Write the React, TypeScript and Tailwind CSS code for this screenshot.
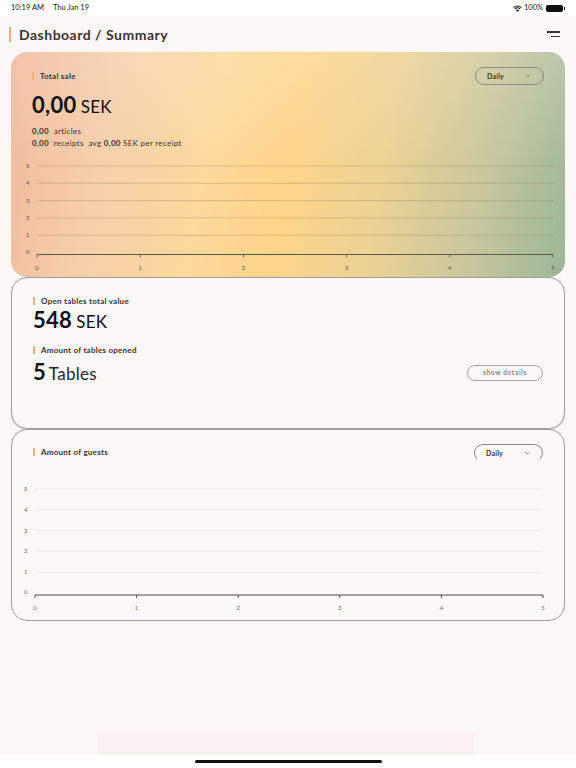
import { ChevronDown } from 'lucide-react';

const font = { fontFamily: 'Lato, "Open Sans", sans-serif' };

const SectionTitle = ({ text }: { text: string }) => (
  <div className="flex items-center gap-[6px]">
    <div className="w-[2px] h-[8px] bg-[#f2b072]" />
    <span className="text-[8px] font-bold tracking-[0.25px] text-[#3b3434]">{text}</span>
  </div>
);

const Dropdown = ({ open }: { open?: boolean }) => (
  <div
    className={`flex items-center justify-between w-[69px] h-[18px] px-[11px] rounded-full border border-[#8c8783] ${
      open ? 'border-b-transparent' : ''
    }`}
  >
    <span className="text-[7px] font-bold tracking-[0.2px] text-[#3b3434]">Daily</span>
    <ChevronDown className="w-[8px] h-[8px] text-[#6b6563]" strokeWidth={2} />
  </div>
);

// empty line chart: y labels 0..5, x labels 0..5
const EmptyChart = ({
  width,
  height,
  left,
  right,
  top,
  step,
  labelX,
  lineColor,
  axisColor,
  labelColor,
}: {
  width: number;
  height: number;
  left: number;
  right: number;
  top: number;
  step: number;
  labelX: number;
  lineColor: string;
  axisColor: string;
  labelColor: string;
}) => {
  const axisY = top + step * 5 + 2;
  const xs = [0, 1, 2, 3, 4, 5].map((i) => left + ((right - left) / 5) * i);
  return (
    <svg width={width} height={height} className="block">
      {[5, 4, 3, 2, 1].map((v, i) => (
        <g key={v}>
          <text x={labelX} y={top + i * step + 2} fontSize="6" fill={labelColor} fontFamily="Lato, sans-serif">
            {v}
          </text>
          <line x1={left} x2={right} y1={top + i * step} y2={top + i * step} stroke={lineColor} strokeWidth="1" />
        </g>
      ))}
      <text x={labelX} y={top + 5 * step + 1} fontSize="6" fill={labelColor} fontFamily="Lato, sans-serif">
        0
      </text>
      <line x1={left} x2={right} y1={axisY} y2={axisY} stroke={axisColor} strokeWidth="1" />
      {xs.map((x, i) => (
        <g key={i}>
          <line x1={x} x2={x} y1={axisY} y2={axisY + 3} stroke={axisColor} strokeWidth="1" />
          <text x={x} y={axisY + 15} fontSize="6" fill={labelColor} textAnchor="middle" fontFamily="Lato, sans-serif">
            {i}
          </text>
        </g>
      ))}
    </svg>
  );
};

const App = () => {
  return (
    <div style={font} className="w-[576px] h-[768px] bg-white flex flex-col overflow-hidden">
      {/* Status bar */}
      <div className="h-[16px] flex items-center justify-between px-[11px] text-[7.5px] text-[#1a1a1a]">
        <div className="flex gap-[9px]">
          <span>10:19 AM</span>
          <span>Thu Jan 19</span>
        </div>
        <div className="flex items-center gap-[2px]">
          <svg width="9" height="7" viewBox="0 0 12 9">
            <path d="M6 9 L4 6.8 A3 3 0 0 1 8 6.8 Z" fill="#111" />
            <path d="M2.4 5.2 A5.2 5.2 0 0 1 9.6 5.2" stroke="#111" strokeWidth="1.4" fill="none" />
            <path d="M0.7 3.3 A7.6 7.6 0 0 1 11.3 3.3" stroke="#111" strokeWidth="1.4" fill="none" />
          </svg>
          <span>100%</span>
          <div className="flex items-center ml-[1px]">
            <div className="w-[17px] h-[7px] rounded-[2px] bg-[#111]" />
            <div className="w-[1px] h-[3px] bg-[#111] ml-[1px]" />
          </div>
        </div>
      </div>

      {/* Page */}
      <div className="flex-1 bg-[#fbf8f7] flex flex-col relative">
        {/* Header */}
        <div className="flex items-center justify-between h-[36px] pl-[9px] pr-[16px]">
          <div className="flex items-center gap-[8px]">
            <div className="w-[2px] h-[15px] bg-[#f2b072]" />
            <h1 className="text-[14px] font-bold text-[#3b3434] tracking-[0.5px]">Dashboard / Summary</h1>
          </div>
          <div className="flex flex-col items-end gap-[3px]">
            <div className="w-[13px] h-[1.5px] bg-[#3b3434]" />
            <div className="w-[9px] h-[1.5px] bg-[#3b3434]" />
          </div>
        </div>

        <div className="px-[11px] flex flex-col">
          {/* Total sale card */}
          <div className="h-[225px] rounded-[16px] bg-[linear-gradient(180deg,rgba(255,255,255,0.15)_0%,rgba(255,255,255,0)_55%),linear-gradient(100deg,#f0b99c_0%,#f6cfab_18%,#fcd99c_36%,#fdd58a_50%,#ecd294_66%,#cbc89d_82%,#9bb797_100%)] flex flex-col">
            <div className="flex justify-between pt-[15px] pl-[21px] pr-[21px]">
              <div className="flex flex-col">
                <div className="pt-[3px]">
                  <SectionTitle text="Total sale" />
                </div>
                <div className="flex items-baseline gap-[4px] mt-[10px] text-[#111]">
                  <span className="text-[22px] font-bold leading-[26px] tracking-[0.3px]">0,00</span>
                  <span className="text-[17px] tracking-[0.3px]">SEK</span>
                </div>
                <div className="mt-[5px] text-[8px] leading-[12px] tracking-[0.3px] text-[#3b3434]">
                  <div>
                    <span className="font-bold">0,00</span>&nbsp; articles
                  </div>
                  <div>
                    <span className="font-bold">0,00</span>&nbsp; receipts&nbsp; avg <span className="font-bold">0,00</span> SEK per receipt
                  </div>
                </div>
              </div>
              <Dropdown />
            </div>
            <div className="mt-auto mb-[3px]">
              <EmptyChart
                width={554}
                height={118}
                left={26}
                right={542}
                top={10}
                step={17.3}
                labelX={15}
                lineColor="rgba(120,100,70,0.25)"
                axisColor="#5d5a50"
                labelColor="#5d5850"
              />
            </div>
          </div>

          {/* Open tables card */}
          <div className="h-[152px] rounded-[16px] border border-[#a29d9a] shadow-[0_1px_1px_rgba(0,0,0,0.15)] bg-[#fbf8f7] flex pt-[17px] pl-[21px] pr-[21px]">
            <div className="flex-1 flex flex-col">
              <SectionTitle text="Open tables total value" />
              <div className="flex items-baseline gap-[4px] mt-[1px] text-[#111]">
                <span className="text-[22px] font-bold leading-[24px] tracking-[0.3px]">548</span>
                <span className="text-[17px] tracking-[0.3px]">SEK</span>
              </div>
              <div className="mt-[9px]">
                <SectionTitle text="Amount of tables opened" />
              </div>
              <div className="flex items-center justify-between mt-[4px]">
                <div className="flex items-baseline gap-[3px] text-[#111]">
                  <span className="text-[22px] font-bold leading-[24px]">5</span>
                  <span className="text-[17px] tracking-[0.3px] text-[#2a2626]">Tables</span>
                </div>
                <div className="w-[76px] h-[16px] rounded-full border border-[#aaa5a3] flex items-center justify-center text-[6.5px] font-bold tracking-[0.7px] text-[#8c8785]">
                  show details
                </div>
              </div>
            </div>
          </div>

          {/* Guests card */}
          <div className="h-[192px] rounded-[16px] border border-[#a29d9a] bg-[#fbf8f7] flex flex-col">
            <div className="flex justify-between pt-[14px] pl-[21px] pr-[21px]">
              <div className="pt-[2px]">
                <SectionTitle text="Amount of guests" />
              </div>
              <Dropdown open />
            </div>
            <div className="mt-auto mb-[7px]">
              <EmptyChart
                width={552}
                height={128}
                left={23}
                right={531}
                top={4}
                step={20.8}
                labelX={12}
                lineColor="#ebe7e5"
                axisColor="#4e4a48"
                labelColor="#6f6a68"
              />
            </div>
          </div>
        </div>

        {/* faint toast at bottom */}
        <div className="absolute left-[98px] bottom-0 w-[376px] h-[22px] rounded-t-[4px] bg-[#faf0f0]" />
      </div>

      {/* Home indicator area */}
      <div className="h-[13px] bg-white flex items-center justify-center">
        <div className="w-[187px] h-[3px] rounded-full bg-[#111]" />
      </div>
    </div>
  );
};

export default App;
